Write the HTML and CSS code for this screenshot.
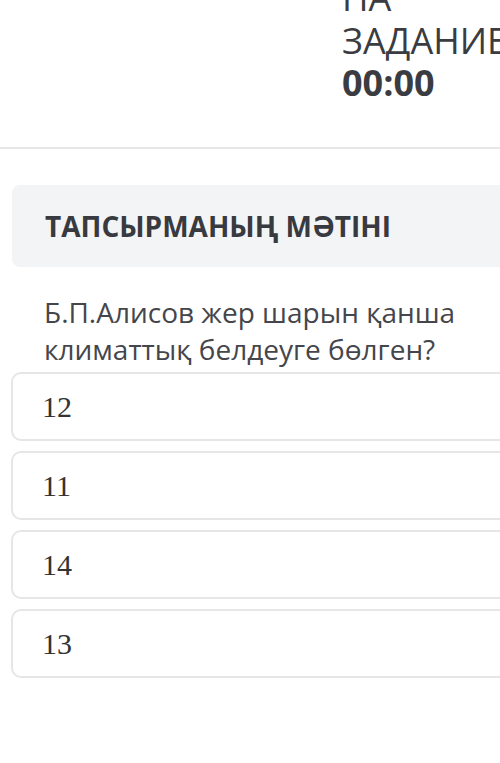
FILE: index.html
```html
<!DOCTYPE html>
<html lang="kk">
<head>
  <meta charset="UTF-8">
  <meta name="viewport" content="width=device-width, initial-scale=1.0">
  <title>Тапсырма</title>
  <link rel="stylesheet" href="styles.css">
</head>
<body>
  <div id="page">
    <div id="header">
      <div class="timer">
        <span class="timer-label">НА</span>
        <span class="timer-label">ЗАДАНИЕ</span>
        <span class="timer-value">00:00</span>
      </div>
    </div>

    <div id="task">
      <div class="task-title">ТАПСЫРМАНЫҢ МӘТІНІ</div>

      <p class="question">Б.П.Алисов жер шарын қанша климаттық белдеуге бөлген?</p>

      <ul class="answers">
        <li>12</li>
        <li>11</li>
        <li>14</li>
        <li>13</li>
      </ul>
    </div>
  </div>
</body>
</html>
```

FILE: styles.css
```css
*{
  margin: 0;
  padding: 0;
}

body {
  background: #fff;
  overflow: hidden;
  font-family: "Open Sans", "Noto Sans", sans-serif;
  color: #3b3c41;
}

#page {
  width: 620px;
}

#header {
  border-bottom: 2px solid #e7e7e7;
  padding-bottom: 43px;
}

.timer {
  margin-left: 342px;
  margin-top: -24px;
  font-size: 36px;
  line-height: 43px;
  white-space: nowrap;
}

.timer span {
  display: block;
}

.timer-value {
  font-weight: 700;
  margin-top: -1px;
}

#task {
  padding: 36px 0 0 12px;
}

.task-title {
  height: 82px;
  padding-left: 33px;
  background: #f3f4f6;
  border-radius: 8px;
  display: flex;
  align-items: center;
  font-size: 28px;
  font-weight: 700;
  color: #393a3f;
}

.question {
  width: 440px;
  margin: 27px 0 0 32px;
  font-size: 28px;
  line-height: 37px;
  color: #45464b;
}

.answers {
  list-style: none;
  margin: 4px 0 0 -1px;
  display: flex;
  flex-direction: column;
  gap: 10px;
}

.answers li {
  height: 69px;
  box-sizing: border-box;
  padding-left: 29px;
  border: 2px solid #e6e6e6;
  border-radius: 10px;
  display: flex;
  align-items: center;
  font-family: "Liberation Serif", "DejaVu Serif", serif;
  font-size: 30px;
  color: #333;
}
```
